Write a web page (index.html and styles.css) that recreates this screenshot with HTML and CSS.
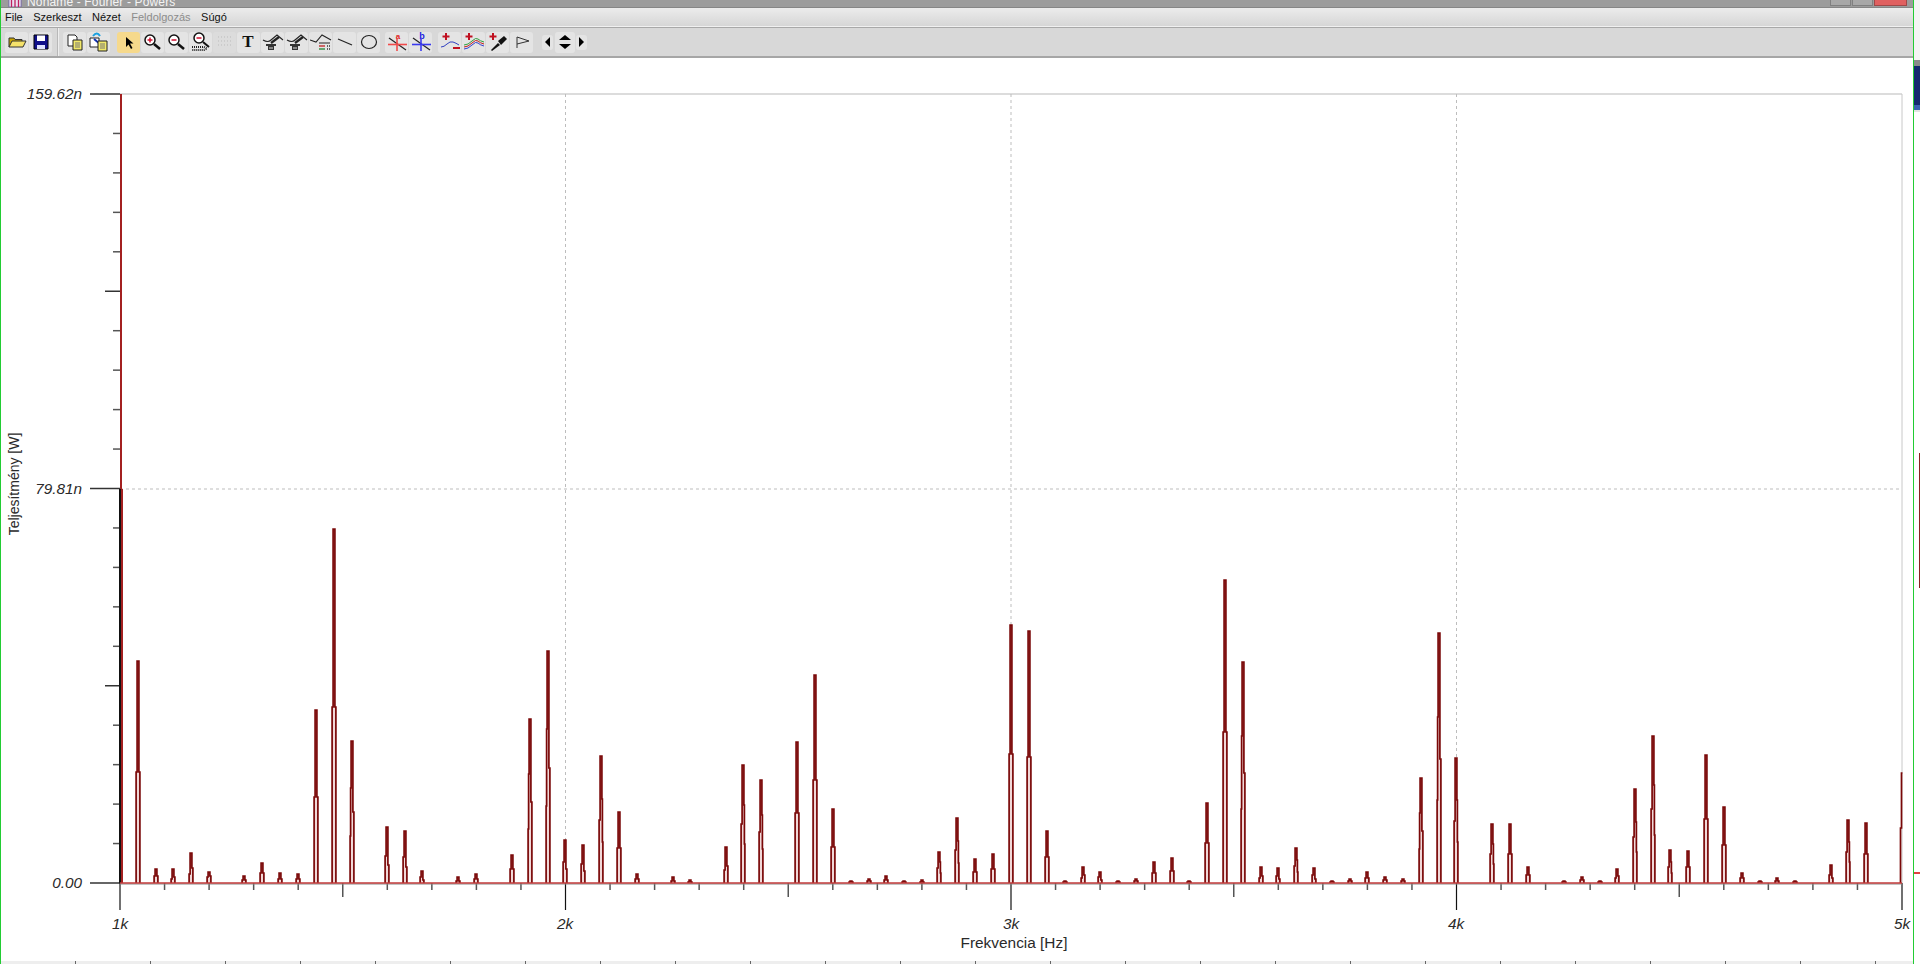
FILE: index.html
```html
<!DOCTYPE html>
<html lang="hu">
<head>
<meta charset="utf-8">
<title>Noname - Fourier - Powers</title>
<link rel="stylesheet" href="styles.css">
</head>
<body>
<div class="edge"></div>
<div class="app">
  <header class="titlebar">
    <svg class="app-icon" viewBox="0 0 16 8"><path d="M1 0V8H15V0" fill="#e8e0f0" stroke="#7060a0"/><path d="M4 0V8M8 0V8M12 0V8" stroke="#c02060" stroke-width="1.5"/></svg>
    <span class="title-text">Noname - Fourier - Powers</span>
    <div class="winbtns">
      <span class="winbtn"></span>
      <span class="winbtn"></span>
      <span class="winbtn winclose"></span>
    </div>
  </header>
  <nav class="menubar">
    <span>File</span><span>Szerkeszt</span><span>Nézet</span><span class="disabled">Feldolgozás</span><span>Súgó</span>
  </nav>
  <div class="toolbar">
    <div class="tbgroup first">
      <button class="tb"><svg viewBox="0 0 22 20"><path d="M3 15V6H8L9 7.5H16V9" fill="#c9a400" stroke="#333"/><path d="M3 15L6 9H20L17 15Z" fill="#f5e26a" stroke="#333"/></svg></button>
      <button class="tb"><svg viewBox="0 0 22 20"><path d="M4 3H18V17H4Z" fill="#10108a" stroke="#000"/><path d="M7 3.500H15V9H7Z" fill="#fff"/><path d="M7 13H15V17H7Z" fill="#dfe3ff"/></svg></button>
    </div>
    <div class="tbgroup main">
      <button class="tb"><svg viewBox="0 0 22 20"><path d="M4 3H11L13 5V14H4Z" fill="#fff" stroke="#222"/><path d="M9 8H18V18H9Z" fill="#f2e96a" stroke="#222"/><path d="M11 11H16M11 13H16M11 15H16" stroke="#777"/></svg></button>
      <button class="tb"><svg viewBox="0 0 22 20"><path d="M2 6H11V15H2Z" fill="#fff" stroke="#222"/><path d="M5 4Q9 -1 12 4" fill="none" stroke="#1aa0e0" stroke-width="2"/><path d="M6 7L12 12" stroke="#1030b0" stroke-width="2"/><path d="M10 9H19V19H10Z" fill="#f2e96a" stroke="#222"/><path d="M12 12H17M12 14H17M12 16H17" stroke="#777"/></svg></button>
      <button class="tb sel gap"><svg viewBox="0 0 22 20"><path d="M8 5V15L10.500 12.500L13 17L14.500 16L12 11.500H15.500Z" fill="#000"/></svg></button>
      <button class="tb"><svg viewBox="0 0 22 20"><circle cx="8" cy="8" r="5" fill="#fff" stroke="#111" stroke-width="1.500"/><path d="M12 12L18 17" stroke="#111" stroke-width="2.500"/><path d="M5.500 8H10.500M8 5.500V10.500" stroke="#d01030" stroke-width="1.500"/></svg></button>
      <button class="tb"><svg viewBox="0 0 22 20"><circle cx="8" cy="8" r="5" fill="#fff" stroke="#111" stroke-width="1.500"/><path d="M12 12L18 17" stroke="#111" stroke-width="2.500"/><path d="M5.500 8H10.500" stroke="#d01030" stroke-width="1.500"/></svg></button>
      <button class="tb"><svg viewBox="0 0 22 20"><circle cx="9" cy="6" r="5" fill="#fff" stroke="#111" stroke-width="1.500"/><path d="M13 10L19 15" stroke="#111" stroke-width="2"/><path d="M6.500 6H11.500" stroke="#d01030" stroke-width="1.500"/><path d="M2 15H14L17 16.500L14 18H2" fill="none" stroke="#222" stroke-dasharray="1 1" stroke-width="2"/></svg></button>
      <button class="tb off"><svg viewBox="0 0 22 20"><path d="M4 5H18M4 9H18M4 13H18" stroke="#bbb" stroke-dasharray="1 2"/></svg></button>
      <button class="tb"><svg viewBox="0 0 22 20"><text class="tb-t" x="10" y="15">T</text></svg></button>
      <button class="tb"><svg viewBox="0 0 22 20"><path d="M1 8Q6 11 9 8L15 3L21 8" fill="none" stroke="#222" stroke-width="1.100"/><path d="M9 11L17 5" stroke="#222" stroke-width="2.200"/><path d="M4 12H14V14H12V18H6V14H4Z" fill="#333"/><path d="M7 16H11" stroke="#ddd"/></svg></button>
      <button class="tb"><svg viewBox="0 0 22 20"><path d="M1 8Q6 11 9 8L15 3L21 8" fill="none" stroke="#222" stroke-width="1.100"/><path d="M9 11L17 5" stroke="#222" stroke-width="2.200"/><path d="M4 12H14V14H12V18H6V14H4Z" fill="#333"/><path d="M7 16H11" stroke="#ddd"/></svg></button>
      <button class="tb"><svg viewBox="0 0 22 20"><path d="M0 8L6 10L12 3L21 8" fill="none" stroke="#222" stroke-width="1.100"/><path d="M9 11H20" stroke="#222"/><path d="M9 14H15" stroke="#c02020" stroke-width="1.300"/><path d="M9 17H15" stroke="#208030" stroke-width="1.300"/><path d="M17 14H20M17 17H20" stroke="#333" stroke-width="1.300" stroke-dasharray="1 1"/></svg></button>
      <button class="tb"><svg viewBox="0 0 22 20"><path d="M4 7L18 13" stroke="#222" stroke-width="1.200"/></svg></button>
      <button class="tb"><svg viewBox="0 0 22 20"><ellipse cx="11" cy="10" rx="7.500" ry="6.500" fill="none" stroke="#222" stroke-width="1.200"/></svg></button>
      <button class="tb gap2"><svg viewBox="0 0 22 20"><path d="M3 6L20 18" stroke="#222" stroke-width="1.200"/><path d="M2 12.500H21" stroke="#f04a4a" stroke-width="1.600"/><path d="M11 7V19" stroke="#f04a4a" stroke-width="1.600"/><text class="tb-a" x="12" y="7">a</text></svg></button>
      <button class="tb"><svg viewBox="0 0 22 20"><path d="M3 6L20 18" stroke="#222" stroke-width="1.200"/><path d="M2 12.500H21" stroke="#3a3af0" stroke-width="1.600"/><path d="M11 7V19" stroke="#3a3af0" stroke-width="1.600"/><text class="tb-b" x="12" y="7">b</text></svg></button>
      <button class="tb gap3"><svg viewBox="0 0 22 20"><path d="M7 1V8M3.500 4.500H10.500" stroke="#c01020" stroke-width="2"/><path d="M2 15Q5 15 8 12T14 10T20 13" fill="none" stroke="#3040c0" stroke-width="1"/><path d="M14 16H21" stroke="#c01020" stroke-width="2"/></svg></button>
      <button class="tb"><svg viewBox="0 0 22 20"><path d="M6 1V8M2.500 4.500H9.500" stroke="#c01020" stroke-width="2"/><path d="M1 13Q5 13 9 9T15 7T21 10" fill="none" stroke="#30a040" stroke-width="1"/><path d="M1 15Q5 15 9 11T15 9T21 12" fill="none" stroke="#c02020" stroke-width="1"/><path d="M1 17Q5 17 9 13T15 11T21 14" fill="none" stroke="#3040d0" stroke-width="1"/></svg></button>
      <button class="tb"><svg viewBox="0 0 22 20"><path d="M6 1V8M2.500 4.500H9.500" stroke="#c01020" stroke-width="2"/><path d="M4 18L11 11L13 13L5 19Z" fill="#111"/><path d="M11 9L17 4L20 7L14 13Z" fill="#111"/></svg></button>
      <button class="tb"><svg viewBox="0 0 22 20"><path d="M6 16V5L18 9L6 12" fill="none" stroke="#333" stroke-width="1"/></svg></button>
      <button class="tb tiny gap4"><svg viewBox="0 0 11 14"><path d="M8 2V12L3 7Z" fill="#000"/></svg></button>
      <button class="tb mid"><svg viewBox="0 0 20 20"><path d="M10 3L16 8H4Z" fill="#000"/><path d="M4 12H16L10 17Z" fill="#000"/></svg></button>
      <button class="tb tiny"><svg viewBox="0 0 11 14"><path d="M3 2V12L8 7Z" fill="#000"/></svg></button>
    </div>
  </div>
  <main class="plot">
    <svg class="chart" id="chart" viewBox="1 58 1912 903" preserveAspectRatio="none">
      <g id="grid"></g>
      <g id="ticks"></g>
      <g id="peaks"></g>
      <text class="val" x="82" y="99">159.62n</text>
      <text class="val" x="82" y="494">79.81n</text>
      <text class="val" x="82" y="888">0.00</text>
      <text class="tick-x" x="120" y="929">1k</text>
      <text class="tick-x" x="565" y="929">2k</text>
      <text class="tick-x" x="1011" y="929">3k</text>
      <text class="tick-x" x="1456" y="929">4k</text>
      <text class="tick-x" x="1902" y="929">5k</text>
      <text class="axis-name axis-x" x="1014" y="948">Frekvencia [Hz]</text>
      <text class="axis-name" transform="translate(19 484) rotate(-90)">Teljesítmény [W]</text>
    </svg>
  </main>
  <div class="bottomstrip"></div>
</div>
<div class="edge"></div>
<div class="sliver"></div>
<script src="chart.js"></script>
</body>
</html>
```

FILE: styles.css
```css
* { box-sizing: border-box; }
html, body { height: 100%; margin: 0; }
body {
  display: flex;
  overflow: hidden;
  background: #fff;
  font-family: "Liberation Sans", Arial, sans-serif;
}
.edge { width: 1px; flex: none; background: #22cc33; }
.sliver {
  width: 6px;
  flex: none;
  background:
    linear-gradient(transparent 453px, #8a2020 453px, #8a2020 588px, transparent 588px) right top / 1px 100% no-repeat,
    linear-gradient(#f4f4f4 0, #f4f4f4 60px, #8a8a8a 60px, #8a8a8a 66px, #14286e 66px, #14286e 105px, #3a5fb0 105px, #3a5fb0 110px, #e4e4e4 110px, #e4e4e4 112px, #fff 112px, #fff 872px, #e04040 872px, #e04040 874px, #fff 874px);
}
.app { flex: 1; min-width: 0; display: flex; flex-direction: column; }

.titlebar {
  height: 8px;
  flex: none;
  display: flex;
  align-items: flex-end;
  overflow: hidden;
  background: #9c9c9c;
  border-bottom: 1px solid #868686;
  padding-left: 6px;
}
.app-icon { width: 16px; height: 7px; flex: none; }
.title-text {
  margin-left: 4px;
  margin-bottom: -1px;
  line-height: 12px;
  height: 12px;
  font-size: 12px;
  letter-spacing: .15px;
  white-space: nowrap;
  color: #f4f4f4;
}
.winbtns { margin-left: auto; margin-right: 6px; display: flex; gap: 1px; align-self: flex-start; }
.winbtn { width: 21px; height: 6px; background: #a8a8a8; border: 1px solid #808080; border-top: 0; }
.winclose { width: 33px; background: #e06060; border-color: #a04848; }

.menubar {
  height: 19px;
  flex: none;
  display: flex;
  align-items: center;
  gap: 10.5px;
  padding-left: 4px;
  font-size: 11px;
  color: #111;
  background: linear-gradient(#ececec, #d6d6d6);
  border-bottom: 1px solid #f0f0f0;
}
.menubar .disabled { color: #8c8c8c; }

.toolbar {
  height: 31px;
  flex: none;
  display: flex;
  align-items: stretch;
  background: #d8d8d8;
  border-top: 1px solid #a8a8a8;
  border-bottom: 2px solid #a6a6a6;
  padding-left: 4px;
}
.tbgroup { display: flex; align-items: center; gap: 1px; }
.tbgroup.main {
  margin-left: 5px;
  padding-left: 5px;
  border-left: 1px solid #b8b8b8;
  box-shadow: inset 1px 0 0 #eee;
}
.tb {
  width: 23px;
  height: 21px;
  padding: 0;
  border: 0;
  border-radius: 3px;
  background: #e4e4e4;
  display: flex;
  align-items: center;
  justify-content: center;
}
.tb svg { width: 22px; height: 20px; display: block; }
.tb.sel { background: #f6d98c; }
.tb.off { background: #dcdcdc; }
.tb.gap { margin-left: 6px; }
.tb.gap2 { margin-left: 4px; }
.tb.gap3 { margin-left: 5px; }
.tb.gap4 { margin-left: 8px; }
.tb.tiny { width: 11px; height: 15px; }
.tb.tiny svg { width: 11px; height: 14px; }
.tb.mid { width: 20px; height: 21px; margin-left: 1px; }
.tb.mid svg { width: 20px; height: 20px; }
.tb-t { font: bold 17px "Liberation Serif", serif; text-anchor: middle; fill: #111; }
.tb-a { font: bold 8px "Liberation Sans", sans-serif; text-anchor: middle; fill: #e02020; }
.tb-b { font: bold 9px "Liberation Sans", sans-serif; text-anchor: middle; fill: #2020e0; }

.plot { flex: 1; min-height: 0; }
.chart { display: block; width: 100%; height: 100%; }
.val { font: italic 15.300px "Liberation Sans", sans-serif; text-anchor: end; fill: #2a2a2a; }
.tick-x { font: italic 15.300px "Liberation Sans", sans-serif; text-anchor: middle; fill: #2a2a2a; }
.axis-name { font-size: 14px; font-family: "Liberation Sans", sans-serif; text-anchor: middle; fill: #2a2a2a; }
.axis-x { font-size: 15.400px; }

.frame { fill: none; stroke: #c8c8c8; stroke-width: 1; }
.frame-top { stroke: #dcdcdc; stroke-width: 2; }
.dots { stroke: #bdbdbd; stroke-width: 1; stroke-dasharray: 3 3; }
.tick { stroke: #555; stroke-width: 1.500; }
.tick-main { stroke: #333; stroke-width: 1.500; }
.tick-k { stroke: #111; stroke-width: 1.200; }
.axis-black { stroke: #111; stroke-width: 2; }
.spike { stroke: #a32020; stroke-width: 2; }
.base-under { stroke: #888; stroke-width: 1; }
.base-red { stroke: #c23a3a; stroke-width: 1.500; }
.peak { fill: #f0d8d8; stroke: #7a0808; stroke-width: 1.700; }
.peak-open { fill: none; }

.bottomstrip {
  height: 3px;
  flex: none;
  background: repeating-linear-gradient(90deg, #eee 0, #eee 74px, #666 74px, #666 75px);
}
```

FILE: chart.js
```js
var NS = "http://www.w3.org/2000/svg";
var BASE = 883, TOP = 94, X0 = 120, X1 = 1902;

function line(parent, cls, x1, y1, x2, y2) {
  var el = document.createElementNS(NS, "line");
  el.setAttribute("class", cls);
  el.setAttribute("x1", x1);
  el.setAttribute("y1", y1);
  el.setAttribute("x2", x2);
  el.setAttribute("y2", y2);
  parent.appendChild(el);
}

var grid = document.getElementById("grid");
var ticks = document.getElementById("ticks");
var peaks = document.getElementById("peaks");

line(grid, "frame frame-top", X0, TOP, X1, TOP);
line(grid, "frame", X1, TOP, X1, BASE);
line(grid, "dots", X0, 489, X1, 489);
[565.5, 1011, 1456.5].forEach(function (x) { line(grid, "dots", x, TOP, x, BASE); });

var i, y, x;
for (i = 0; i <= 20; i++) {
  y = TOP + (BASE - TOP) * i / 20;
  if (i % 10 === 0) line(ticks, "tick-main", 90, y, X0, y);
  else if (i % 5 === 0) line(ticks, "tick-main", 105, y, X0, y);
  else line(ticks, "tick", 113, y, X0, y);
}
for (i = 0; i <= 40; i++) {
  x = X0 + (X1 - X0) * i / 40;
  if (i % 10 === 0) line(ticks, "tick-k", x, BASE, x, 910);
  else if (i % 5 === 0) line(ticks, "tick", x, BASE, x, 897);
  else line(ticks, "tick", x, BASE, x, 890);
}

line(ticks, "axis-black", 120, 489, 120, 883);
line(ticks, "spike", 121, TOP, 121, 489);
line(ticks, "spike", 122, 489, 122, BASE);
line(ticks, "base-under", X0, 884, X1, 884);

/* [x, top, left shoulder, right shoulder, inner left, inner right] */
var data = [
  [138,661,772,772],[156,869,876,876],[173,869,879,877],[191,853,874,868],[209,872,877,876],
  [244,876,880,880],[262,863,873,873],[280,873,879,879],[298,874,879,879],
  [316,710,797,797],[334,529,707,707],[352,741,836,812,788],
  [387,827,856,865],[405,831,857,867],[422,871,877,880],[458,877,881,881],[476,874,879,879],
  [512,855,869,869],[530,719,829,802,774],[548,651,806,768,729],[565,840,862,869],
  [583,845,864,871],[601,756,820,842,0,799],[619,812,848,848],[637,874,879,879],
  [673,877,881,881],[690,880,882,882],[726,847,870,866],[743,765,824,844,0,805],
  [761,780,832,849,0,815],[797,742,813,813],[815,675,780,780],[833,809,847,847],[851,881,882,882],
  [869,879,881,881],[886,876,880,880],[904,881,882,882],[922,880,882,882],
  [939,852,868,873,0,862],[957,818,850,863,0,841],[975,859,872,872],[993,854,869,869],
  [1011,625,754,754],[1029,631,757,757],[1047,831,857,857],[1065,881,882,882],
  [1083,867,878,875],[1100,872,877,880],[1118,881,882,882],[1136,879,881,881],
  [1154,862,873,873],[1172,858,871,871],[1189,881,882,882],[1207,803,843,843],
  [1225,580,732,732],[1243,662,809,773,736],[1261,867,878,876],[1278,868,876,879],[1296,848,866,872,0,860],
  [1314,868,875,879],[1332,881,882,882],[1350,879,881,881],[1367,872,878,878],[1385,877,880,880],[1403,879,881,881],
  [1421,778,849,831,813],[1439,633,800,759,717],[1456,758,821,842,0,800],
  [1492,824,854,864,0,844],[1510,824,854,854],[1528,867,875,875],[1564,881,882,882],[1582,877,880,880],[1600,881,882,882],
  [1617,869,878,876],[1635,789,837,852,0,822],[1653,736,809,835,0,785],[1670,850,867,873,0,862],[1688,851,867,867],
  [1706,755,819,819],[1724,807,845,845],[1742,873,878,878],[1760,881,882,882],[1777,878,881,881],[1795,881,882,882],
  [1831,865,875,878],[1848,820,852,862,0,842],[1866,823,854,854]
];

function peakPath(p) {
  var x = p[0], top = p[1], l = p[2], r = p[3], li = p[4], ri = p[5];
  var d = "M" + (x - 1.9) + " " + BASE + "V" + l;
  if (li) d += "H" + (x - 1.4) + "V" + li + "H" + (x - 0.9);
  else d += "H" + (x - 0.9);
  d += "V" + top + "H" + (x + 0.9);
  if (ri) d += "V" + ri + "H" + (x + 1.4) + "V" + r + "H" + (x + 1.9);
  else d += "V" + r + "H" + (x + 1.9);
  d += "V" + BASE;
  return d;
}

data.forEach(function (p) {
  var el = document.createElementNS(NS, "path");
  el.setAttribute("class", "peak");
  el.setAttribute("d", peakPath(p));
  peaks.appendChild(el);
});

var last = document.createElementNS(NS, "path");
last.setAttribute("class", "peak peak-open");
last.setAttribute("d", "M1900.5 883V828H1901.500V773H1902.500");
peaks.appendChild(last);

line(peaks, "base-red", X0, BASE, X1, BASE);
```
